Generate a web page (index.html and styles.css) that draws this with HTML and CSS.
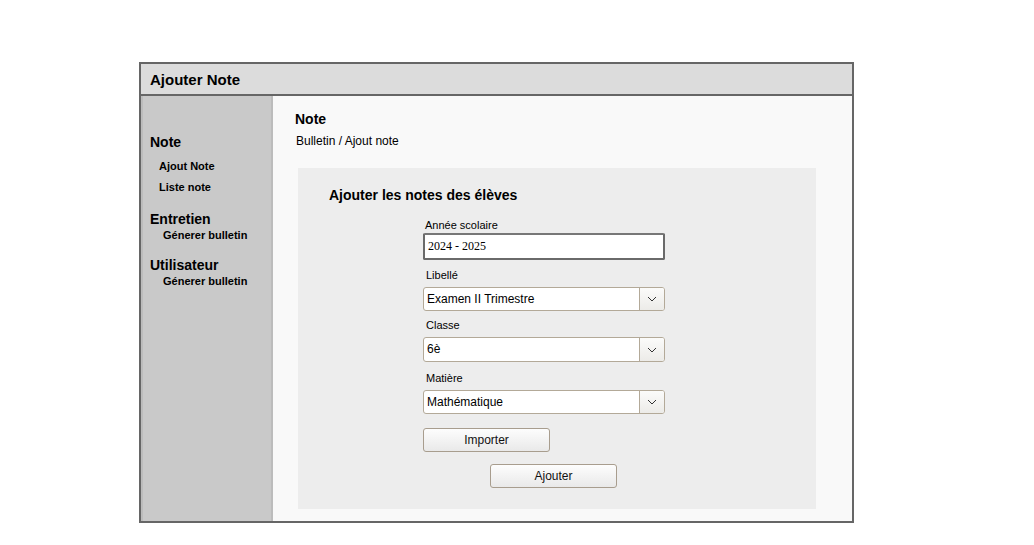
FILE: index.html
```html
<!DOCTYPE html>
<html lang="fr">
<head>
<meta charset="utf-8">
<title>Ajouter Note</title>
<link rel="stylesheet" href="styles.css">
</head>
<body>
<div class="frame">
  <div class="header">Ajouter Note</div>
  <div class="body">
    <aside class="sidebar">
      <div class="group-title first">Note</div>
      <div class="item">Ajout Note</div>
      <div class="item second">Liste note</div>
      <div class="group-title g2">Entretien</div>
      <div class="item deep">Génerer bulletin</div>
      <div class="group-title g3">Utilisateur</div>
      <div class="item deep">Génerer bulletin</div>
    </aside>
    <main class="main">
      <div class="page-title">Note</div>
      <div class="crumb">Bulletin / Ajout note</div>
      <section class="panel">
        <h2 class="panel-title">Ajouter les notes des élèves</h2>
        <div class="fields">
          <div class="label l1">Année scolaire</div>
          <div class="input">2024 - 2025</div>
          <div class="label l2">Libellé</div>
          <div class="select s1"><span class="value">Examen II Trimestre</span><span class="arrow"><svg width="10" height="6" viewBox="0 0 10 6"><path d="M1 1 L5 5 L9 1" fill="none" stroke="#333" stroke-width="1"/></svg></span></div>
          <div class="label l3">Classe</div>
          <div class="select s2"><span class="value">6è</span><span class="arrow"><svg width="10" height="6" viewBox="0 0 10 6"><path d="M1 1 L5 5 L9 1" fill="none" stroke="#333" stroke-width="1"/></svg></span></div>
          <div class="label l4">Matière</div>
          <div class="select s3"><span class="value">Mathématique</span><span class="arrow"><svg width="10" height="6" viewBox="0 0 10 6"><path d="M1 1 L5 5 L9 1" fill="none" stroke="#333" stroke-width="1"/></svg></span></div>
          <button class="btn import">Importer</button>
          <button class="btn add">Ajouter</button>
        </div>
      </section>
    </main>
  </div>
</div>
</body>
</html>
```

FILE: styles.css
```css
* { box-sizing: border-box; }
html, body { margin: 0; padding: 0; background: #fff; }
body {
  font-family: "Liberation Sans", Arial, sans-serif;
  color: #000;
}
.frame {
  margin: 62px 0 0 139px;
  width: 715px;
  height: 461px;
  border: 2px solid #666;
  display: flex;
  flex-direction: column;
}
.header {
  height: 32px;
  background: #dcdcdc;
  border-bottom: 2px solid #666;
  font-size: 15px;
  font-weight: bold;
  padding: 7px 0 0 9px;
  line-height: 17px;
}
.body {
  flex: 1;
  display: flex;
}
.sidebar {
  width: 132px;
  background: #c9c9c9;
  border-left: 2px solid #bcbcbc;
  border-right: 2px solid #bcbcbc;
  padding-left: 7px;
}
.group-title {
  font-size: 14px;
  font-weight: bold;
  line-height: 16px;
}
.group-title.first { margin-top: 38px; }
.group-title.g2 { margin-top: 17px; }
.group-title.g3 { margin-top: 15px; }
.item {
  font-size: 11px;
  font-weight: bold;
  line-height: 13px;
  padding-left: 9px;
  margin-top: 10px;
}
.item.second { margin-top: 8px; }
.item.deep { padding-left: 13px; margin-top: 2px; }
.main {
  flex: 1;
  background: #f9f9f9;
  padding: 15px 0 0 22px;
}
.page-title {
  font-size: 14px;
  font-weight: bold;
  line-height: 16px;
}
.crumb {
  font-size: 12px;
  line-height: 14px;
  margin-top: 7px;
  padding-left: 1px;
}
.panel {
  margin: 20px 0 0 3px;
  width: 518px;
  height: 341px;
  background: #ededed;
  padding: 19px 0 0 31px;
}
.panel-title {
  margin: 0;
  font-size: 14px;
  font-weight: bold;
  line-height: 17px;
}
.fields {
  margin-left: 94px;
  width: 242px;
  display: flex;
  flex-direction: column;
  align-items: flex-start;
}
.label {
  font-size: 11px;
  line-height: 13px;
  padding-left: 2px;
}
.l1 { margin-top: 15px; }
.l2 { margin-top: 9px; padding-left: 3px; }
.l3 { margin-top: 8px; padding-left: 3px; }
.l4 { margin-top: 10px; padding-left: 3px; }
.input {
  margin-top: 1px;
  width: 242px;
  height: 27px;
  background: #fff;
  border: 2px solid #6a6a6a;
  border-top-color: #777;
  border-radius: 2px;
  font-family: "Liberation Serif", "Times New Roman", serif;
  font-size: 12px;
  line-height: 23px;
  padding-left: 3px;
}
.select {
  width: 242px;
  height: 24px;
  background: #fff;
  border: 1px solid #b3a998;
  border-radius: 3px;
  display: flex;
  font-size: 12px;
  overflow: hidden;
}
.s1 { margin-top: 5px; }
.s2 { margin-top: 5px; height: 25px; }
.s3 { margin-top: 5px; }
.select .value {
  flex: 1;
  padding-left: 3px;
  line-height: 22px;
}
.select .arrow {
  width: 25px;
  border-left: 1px solid #b3a998;
  background: linear-gradient(#fbfbfa, #ecebe8);
  display: flex;
  align-items: center;
  justify-content: center;
}
.btn {
  width: 127px;
  height: 24px;
  border: 1px solid #a89d8e;
  border-radius: 3px;
  background: linear-gradient(#fdfdfd, #e9e9e9);
  font-family: "Liberation Sans", Arial, sans-serif;
  font-size: 12px;
  color: #111;
  padding: 0;
}
.import { margin-top: 14px; }
.add { margin-top: 12px; margin-left: 67px; }
```
